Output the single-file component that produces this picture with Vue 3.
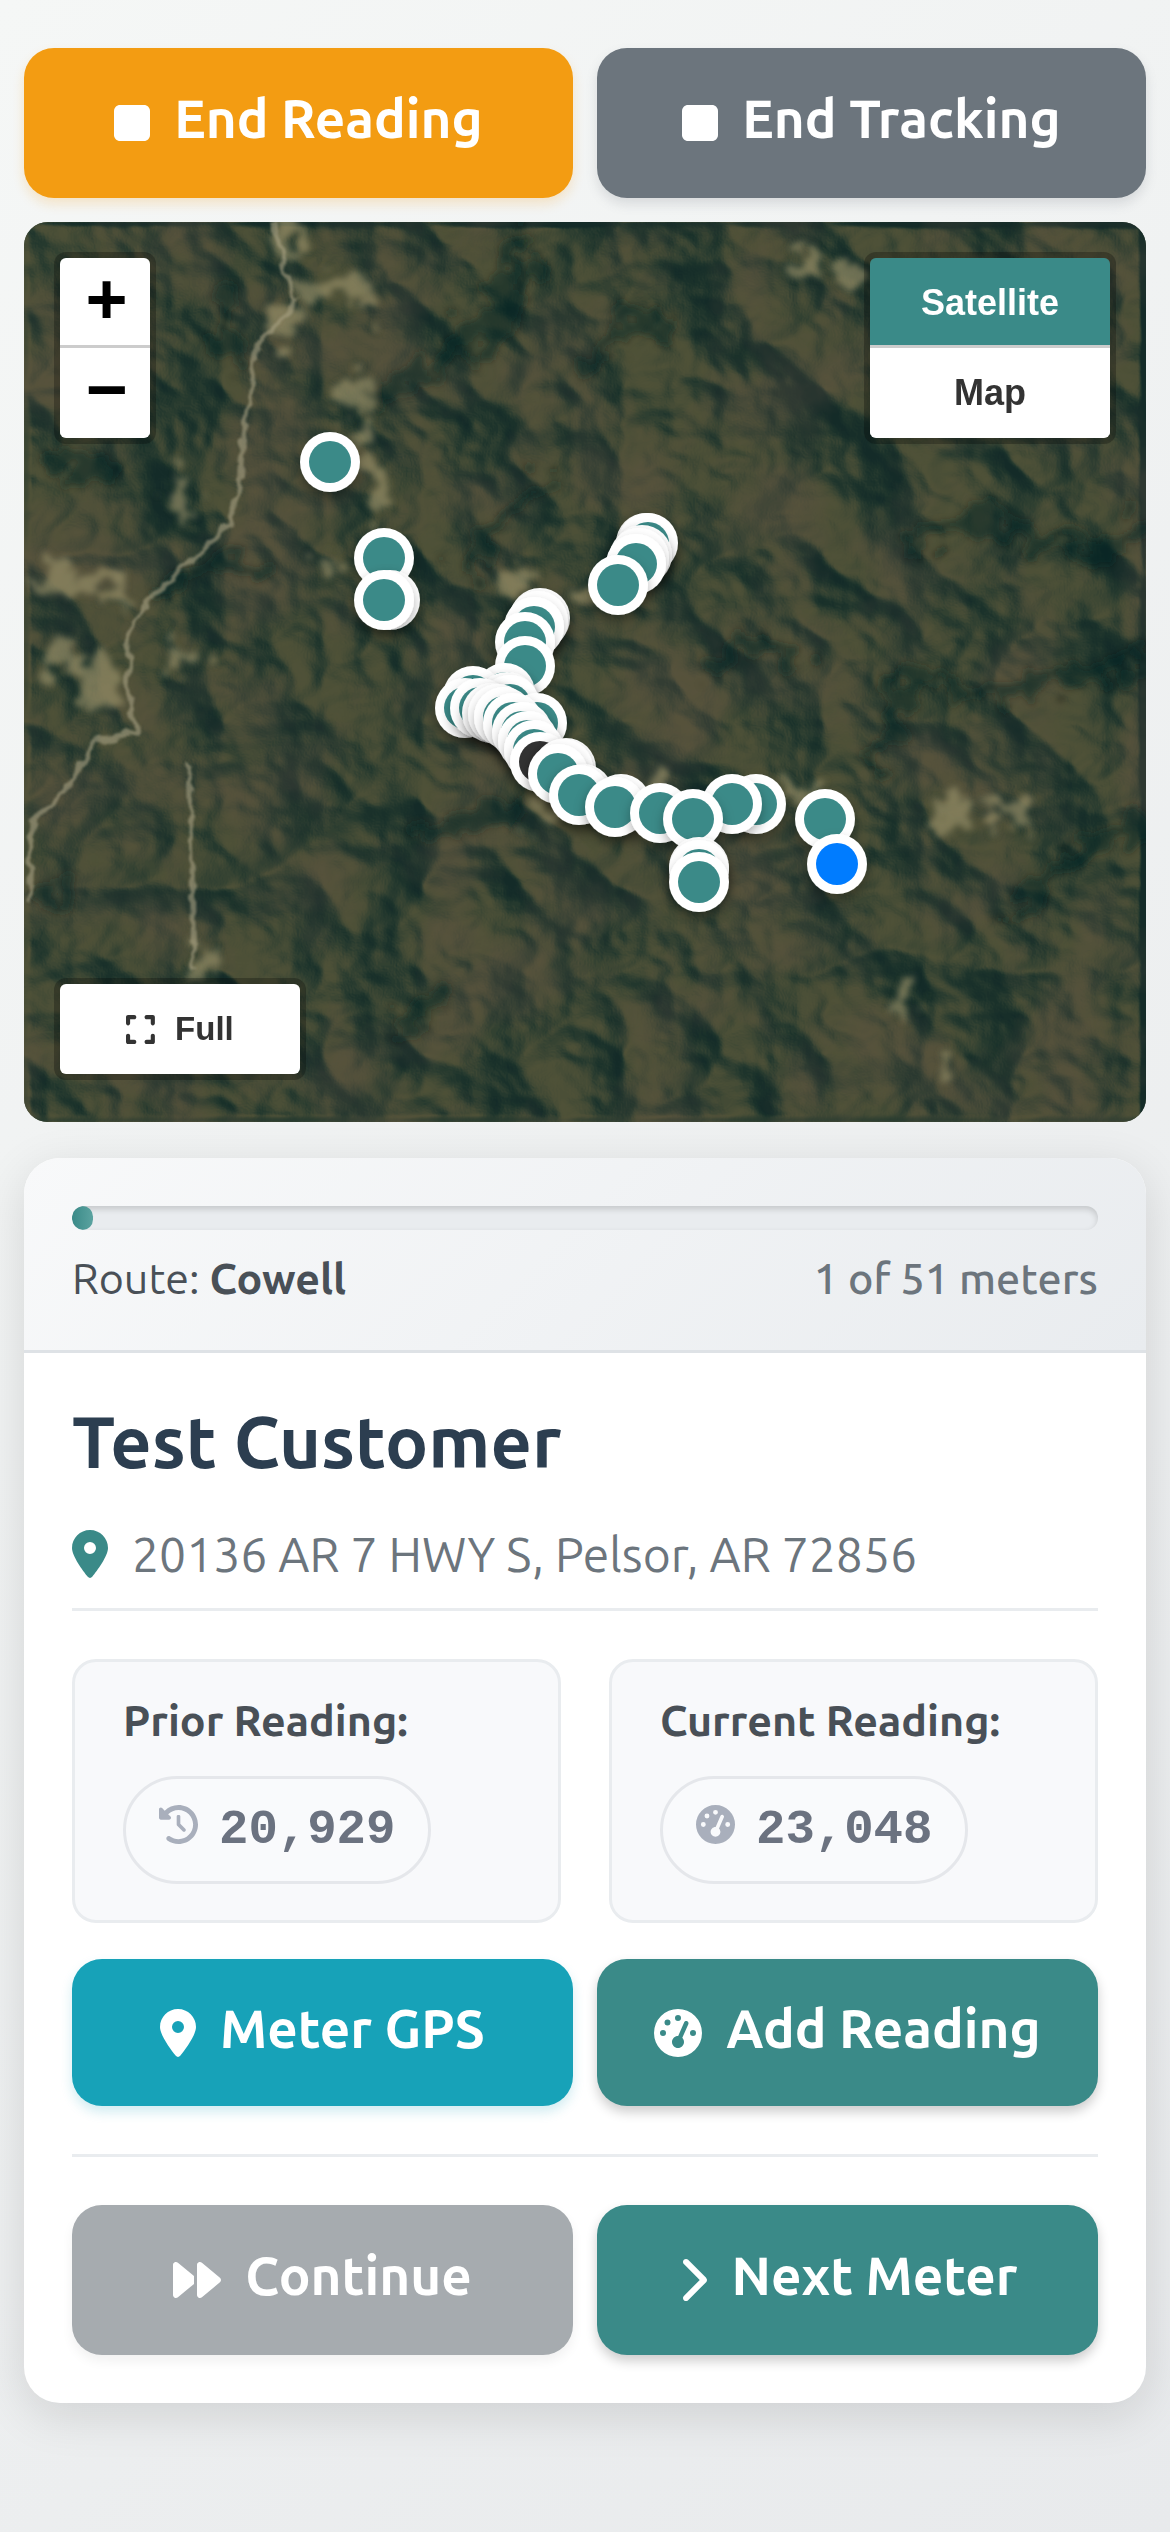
<template>
  <div class="reading-view">
    <div class="button-row">
      <button type="button" class="btn btn-warning">
        <svg class="icon" viewBox="0 0 384 512"><path :d="icons.stop" /></svg>
        <span>End Reading</span>
      </button>
      <button type="button" class="btn btn-secondary">
        <svg class="icon" viewBox="0 0 384 512"><path :d="icons.stop" /></svg>
        <span>End Tracking</span>
      </button>
    </div>

    <div class="map">
      <svg class="map-canvas" viewBox="0 0 1122 900" preserveAspectRatio="xMidYMid slice">
        <defs>
          <filter id="terrain" x="0" y="0" width="100%" height="100%" color-interpolation-filters="sRGB">
            <feTurbulence type="turbulence" baseFrequency="0.005 0.006" numOctaves="5" seed="31" />
            <feColorMatrix values="0 0 0 0 0  0 0 0 0 0  0 0 0 0 0  1 0 0 0 0" />
            <feGaussianBlur stdDeviation="3" />
            <feDiffuseLighting surfaceScale="42" diffuseConstant="1" lighting-color="#ffffff">
              <feDistantLight azimuth="150" elevation="48" />
            </feDiffuseLighting>
            <feComponentTransfer>
              <feFuncR type="table" tableValues="0.08 0.11 0.17 0.24 0.31" />
              <feFuncG type="table" tableValues="0.17 0.2 0.24 0.28 0.32" />
              <feFuncB type="table" tableValues="0.16 0.17 0.19 0.205 0.22" />
            </feComponentTransfer>
          </filter>
          <filter id="soil" x="0" y="0" width="100%" height="100%" color-interpolation-filters="sRGB">
            <feTurbulence type="fractalNoise" baseFrequency="0.01" numOctaves="5" seed="5" />
            <feColorMatrix values="0 0 0 0 0.42  0 0 0 0 0.34  0 0 0 0 0.28  0 3 0 0 -1.2" />
          </filter>
          <filter id="rough" x="-20%" y="-20%" width="140%" height="140%">
            <feTurbulence type="fractalNoise" baseFrequency="0.04" numOctaves="4" seed="9" />
            <feDisplacementMap in="SourceGraphic" scale="60" xChannelSelector="R" yChannelSelector="G" />
            <feGaussianBlur stdDeviation="3" />
          </filter>
          <filter id="rough-line" x="-20%" y="-20%" width="140%" height="140%">
            <feTurbulence type="fractalNoise" baseFrequency="0.06" numOctaves="2" seed="4" />
            <feDisplacementMap in="SourceGraphic" scale="14" xChannelSelector="R" yChannelSelector="G" />
            <feGaussianBlur stdDeviation="1" />
          </filter>
          <filter id="marker-shadow" x="-50%" y="-50%" width="200%" height="200%">
            <feDropShadow dx="0" dy="6" stdDeviation="6" flood-color="#000000" flood-opacity="0.3" />
          </filter>
        </defs>

        <rect width="1122" height="900" filter="url(#terrain)" />
        <rect width="1122" height="900" filter="url(#soil)" opacity="0.3" />

        <g filter="url(#rough)">
          <path class="ridge" d="M500 0 L470 90 L400 150 L330 180 M520 40 L450 140 M440 350 L470 310 L520 255" />
          <path class="ridge" d="M560 150 L610 90 L650 110 M880 320 L960 300 L1080 330 L1122 300 M680 450 L730 420 L780 440" />
          <path class="ridge" d="M850 545 L880 450 L960 470 L1122 440 M980 700 L1040 640 L1122 600 M390 610 L460 600 L500 580" />
          <path class="ridge" d="M200 60 L205 140 M20 240 L90 250 M130 370 L190 340 L250 350 M20 690 L50 660 M370 810 L420 770" />
          <ellipse
            v-for="(field, i) in fields"
            :key="i"
            :cx="field[0]"
            :cy="field[1]"
            :rx="field[2]"
            :ry="field[3]"
            fill="#968d66"
            opacity="0.7"
          />
        </g>
        <g class="roads" filter="url(#rough-line)">
          <path d="M250 0 L262 50 L272 78 L252 105 L232 124 L226 165 L219 210 L216 265 L205 300 L160 345 L125 380 L106 400 L103 470 L112 510 L70 520 L45 565 L8 600 L4 680" />
          <path d="M165 545 L168 640 L170 750" opacity="0.5" />
        </g>

        <g v-for="(marker, i) in markers" :key="i" filter="url(#marker-shadow)">
          <circle :cx="marker.x" :cy="marker.y" r="30" fill="#ffffff" />
          <circle :cx="marker.x" :cy="marker.y" r="21" :fill="marker.color" />
        </g>
      </svg>

      <div class="map-control zoom-control">
        <button type="button" aria-label="Zoom in">+</button>
        <button type="button" aria-label="Zoom out">−</button>
      </div>
      <div class="map-control layer-control">
        <button
          v-for="name in layers"
          :key="name"
          type="button"
          :class="{ active: layer === name }"
          @click="layer = name"
        >
          {{ name }}
        </button>
      </div>
      <div class="map-control full-control">
        <button type="button">
          <svg class="icon" viewBox="0 0 448 512"><path :d="icons.expand" /></svg>
          Full
        </button>
      </div>
    </div>

    <div class="card">
      <div class="card-header">
        <div class="progress" role="progressbar" :aria-valuenow="current" aria-valuemin="0" :aria-valuemax="total">
          <div class="progress-bar" :style="{ width: progress + '%' }"></div>
        </div>
        <div class="progress-info">
          <span class="route">Route: <strong>Cowell</strong></span>
          <span class="count">{{ current }} of {{ total }} meters</span>
        </div>
      </div>

      <div class="card-body">
        <h1>Test Customer</h1>
        <p class="address">
          <svg class="icon" viewBox="0 0 384 512"><path :d="icons.pin" /></svg>
          20136 AR 7 HWY S, Pelsor, AR 72856
        </p>

        <div class="readings">
          <div v-for="reading in readings" :key="reading.label" class="reading">
            <h2>{{ reading.label }}</h2>
            <span class="reading-value">
              <svg class="icon" viewBox="0 0 512 512"><path :d="icons[reading.icon]" /></svg>
              {{ reading.value }}
            </span>
          </div>
        </div>

        <div class="button-row meter-actions">
          <button type="button" class="btn btn-info">
            <svg class="icon" viewBox="0 0 384 512"><path :d="icons.pin" /></svg>
            <span>Meter GPS</span>
          </button>
          <button type="button" class="btn btn-primary">
            <svg class="icon" viewBox="0 0 512 512"><path :d="icons.gauge" /></svg>
            <span>Add Reading</span>
          </button>
        </div>

        <div class="button-row nav-actions">
          <button type="button" class="btn btn-disabled" disabled>
            <svg class="icon" viewBox="0 0 512 512"><path :d="icons.forward" /></svg>
            <span>Continue</span>
          </button>
          <button type="button" class="btn btn-primary">
            <svg class="icon" viewBox="0 0 320 512"><path :d="icons.chevron" /></svg>
            <span>Next Meter</span>
          </button>
        </div>
      </div>
    </div>
  </div>
</template>

<script setup>
import { ref, computed } from 'vue';

const layers = ['Satellite', 'Map'];
const layer = ref('Satellite');

const current = ref(1);
const total = ref(51);
const progress = computed(() => Math.round((current.value / total.value) * 100));

const readings = [
  { label: 'Prior Reading:', value: '20,929', icon: 'history' },
  { label: 'Current Reading:', value: '23,048', icon: 'gauge' }
];

const icons = {
  stop: 'M0 128C0 92.7 28.7 64 64 64H320c35.3 0 64 28.7 64 64V384c0 35.3-28.7 64-64 64H64c-35.3 0-64-28.7-64-64V128z',
  pin: 'M215.7 499.2C267 435 384 279.4 384 192C384 86 298 0 192 0S0 86 0 192c0 87.4 117 243 168.3 307.2c12.3 15.3 35.1 15.3 47.4 0zM192 128a64 64 0 1 1 0 128 64 64 0 1 1 0-128z',
  gauge: 'M0 256a256 256 0 1 1 512 0A256 256 0 1 1 0 256zM288 96a32 32 0 1 0 -64 0 32 32 0 1 0 64 0zM256 416c35.3 0 64-28.7 64-64c0-17.4-6.9-33.1-18.1-44.6L366 161.7c5.3-12.1-.2-26.3-12.3-31.6s-26.3 .2-31.6 12.3L257.9 288c-.6 0-1.3 0-1.9 0c-35.3 0-64 28.7-64 64s28.7 64 64 64zM176 144a32 32 0 1 0 -64 0 32 32 0 1 0 64 0zM96 288a32 32 0 1 0 0-64 32 32 0 1 0 0 64zm352-32a32 32 0 1 0 -64 0 32 32 0 1 0 64 0z',
  history: 'M75 75L41 41C25.9 25.9 0 36.6 0 57.9V168c0 13.3 10.7 24 24 24H134.1c21.4 0 32.1-25.9 17-41l-30.8-30.8C155 85.5 203 64 256 64c106 0 192 86 192 192s-86 192-192 192c-40.8 0-78.6-12.7-109.7-34.4c-14.5-10.1-34.4-6.6-44.6 7.9s-6.6 34.4 7.9 44.6C151.2 495 201.7 512 256 512c141.4 0 256-114.6 256-256S397.4 0 256 0C185.3 0 121.3 28.7 75 75zm181 53c-13.3 0-24 10.7-24 24V256c0 6.4 2.5 12.5 7 17l72 72c9.4 9.4 24.6 9.4 33.9 0s9.4-24.6 0-33.9l-65-65V152c0-13.3-10.7-24-24-24z',
  forward: 'M52.5 440.6c-9.5 7.9-22.8 9.7-34.1 4.4S0 428.4 0 416V96C0 83.6 7.2 72.3 18.4 67s24.5-3.6 34.1 4.4L224 214.3V256v41.7L52.5 440.6zM256 352V256 128 96c0-12.4 7.2-23.7 18.4-29s24.5-3.6 34.1 4.4l192 160c7.3 6.1 11.5 15.1 11.5 24.6s-4.2 18.5-11.5 24.6l-192 160c-9.5 7.9-22.8 9.7-34.1 4.4s-18.4-16.6-18.4-29V352z',
  chevron: 'M310.6 233.4c12.5 12.5 12.5 32.8 0 45.3l-192 192c-12.5 12.5-32.8 12.5-45.3 0s-12.5-32.8 0-45.3L242.7 256 73.4 86.6c-12.5-12.5-12.5-32.8 0-45.3s32.8-12.5 45.3 0l192 192z',
  expand: 'M32 32C14.3 32 0 46.3 0 64v96c0 17.7 14.3 32 32 32s32-14.3 32-32V96h64c17.7 0 32-14.3 32-32s-14.3-32-32-32H32zM64 352c0-17.7-14.3-32-32-32s-32 14.3-32 32v96c0 17.7 14.3 32 32 32h96c17.7 0 32-14.3 32-32s-14.3-32-32-32H64V352zM320 32c-17.7 0-32 14.3-32 32s14.3 32 32 32h64v64c0 17.7 14.3 32 32 32s32-14.3 32-32V64c0-17.7-14.3-32-32-32H320zM448 352c0-17.7-14.3-32-32-32s-32 14.3-32 32v64H320c-17.7 0-32 14.3-32 32s14.3 32 32 32h96c17.7 0 32-14.3 32-32V352z'
};

// x, y, radius x, radius y
const fields = [
  [262, 20, 14, 30], [300, 65, 40, 12], [345, 80, 10, 18], [255, 100, 22, 14], [330, 170, 22, 12],
  [338, 205, 10, 16], [355, 270, 14, 32], [157, 270, 12, 18], [50, 360, 45, 14], [95, 370, 10, 22],
  [490, 360, 22, 14], [560, 370, 22, 14], [155, 435, 14, 12], [75, 460, 18, 30], [40, 440, 24, 14],
  [520, 590, 12, 14], [635, 565, 22, 8], [770, 570, 16, 16], [925, 590, 20, 18], [975, 585, 16, 12],
  [1000, 590, 10, 18], [180, 740, 12, 18], [310, 340, 12, 12], [780, 35, 12, 20], [830, 50, 10, 14],
  [882, 780, 12, 16], [920, 840, 14, 10]
];

// Kept north to south so that southern markers overlap northern ones
const markers = [
  [306, 240], [622, 321], [624, 321], [618, 333], [615, 336], [360, 336], [612, 342], [594, 363],
  [366, 378], [360, 378], [516, 396], [514, 399], [510, 405], [501, 420], [501, 444], [481, 471],
  [449, 474], [483, 480], [486, 483], [441, 486], [456, 486], [468, 491], [474, 492], [480, 495],
  [513, 501], [489, 501], [498, 510], [504, 519], [510, 528], [516, 540, '#333333'], [542, 546],
  [539, 547], [534, 552], [559, 572], [555, 573], [732, 582], [708, 582], [597, 582], [591, 585],
  [636, 591], [669, 597], [801, 597], [813, 642, '#007bff'], [675, 645], [675, 648], [675, 660]
].map(([x, y, color = '#3a8a88']) => ({ x, y, color }));
</script>

<style>
body {
  margin: 0;
}
</style>

<style scoped>
.reading-view {
  box-sizing: border-box;
  min-height: 100vh;
  padding: 48px 24px;
  background: linear-gradient(135deg, #f5f7f6 0%, #e8eaec 100%);
  font-family: Ubuntu, 'Noto Sans', sans-serif;
  color: #495057;
}

.icon {
  display: block;
  flex: none;
  height: 48px;
  fill: currentColor;
}

.button-row {
  display: grid;
  grid-template-columns: 1fr 1fr;
  gap: 24px;
}

.btn {
  display: flex;
  align-items: center;
  justify-content: center;
  gap: 24px;
  height: 150px;
  padding: 0 24px;
  border: none;
  border-radius: 30px;
  color: #ffffff;
  font-family: inherit;
  font-size: 53px;
  font-weight: 600;
  line-height: 60px;
  white-space: nowrap;
  box-shadow: 0 6px 12px rgba(0, 0, 0, 0.2);
  cursor: pointer;
}

.btn span {
  padding-bottom: 8px;
}

.btn-warning {
  background: #f39c12;
  box-shadow: 0 6px 12px rgba(243, 156, 18, 0.2);
}

.btn-secondary {
  background: #6c757d;
  box-shadow: 0 6px 12px rgba(108, 117, 125, 0.2);
}

.btn-info {
  background: #17a2b8;
  box-shadow: 0 6px 12px rgba(23, 162, 184, 0.2);
}

.btn-primary {
  background: #3a8a88;
}

.btn-disabled {
  background: #a6abaf;
  box-shadow: 0 6px 12px rgba(0, 0, 0, 0.06);
  cursor: not-allowed;
}

.map {
  position: relative;
  height: 900px;
  margin-top: 24px;
  border-radius: 24px;
  overflow: hidden;
  background: #3f4a36;
}

.map-canvas {
  display: block;
  width: 100%;
  height: 100%;
}

.ridge {
  fill: none;
  stroke: #0b2422;
  stroke-width: 18;
  opacity: 0.5;
}

.roads path {
  fill: none;
  stroke: #a8a184;
  stroke-width: 5;
  stroke-linejoin: round;
  opacity: 0.6;
}

.map-control {
  position: absolute;
  display: flex;
  flex-direction: column;
  border-radius: 6px;
  overflow: hidden;
  box-shadow: 0 0 0 6px rgba(0, 0, 0, 0.25);
}

.map-control button {
  display: flex;
  align-items: center;
  justify-content: center;
  gap: 18px;
  height: 90px;
  padding: 0;
  border: none;
  background: #ffffff;
  color: #333333;
  font: bold 36px 'Liberation Sans', Arial, sans-serif;
  cursor: pointer;
}

.map-control button + button {
  box-shadow: 0 -3px 0 #cccccc;
}

.zoom-control {
  top: 36px;
  left: 36px;
  width: 90px;
}

.zoom-control button {
  padding-top: 4px;
  color: #000000;
  font: bold 72px 'Liberation Mono', monospace;
  text-indent: 3px;
}

.layer-control {
  top: 36px;
  right: 36px;
  width: 240px;
}

.layer-control .active {
  background: #3a8a88;
  color: #ffffff;
}

.full-control {
  bottom: 48px;
  left: 36px;
  width: 240px;
}

.full-control button {
  gap: 20px;
  font-size: 33px;
}

.full-control .icon {
  height: 33px;
}

.card {
  margin-top: 36px;
  border-radius: 36px;
  overflow: hidden;
  background: #ffffff;
  box-shadow: 0 12px 48px rgba(0, 0, 0, 0.12);
}

.card-header {
  padding: 48px;
  border-bottom: 3px solid #dee2e6;
  background: linear-gradient(135deg, #f8f9fa 0%, #e9ecef 100%);
}

.progress {
  height: 24px;
  border-radius: 12px;
  overflow: hidden;
  background: #e9ecef;
  box-shadow: inset 0 3px 6px rgba(0, 0, 0, 0.16);
}

.progress-bar {
  height: 100%;
  border-radius: 12px;
  background: linear-gradient(90deg, #3a8a88, #5ba3a0);
}

.progress-info {
  display: flex;
  justify-content: space-between;
  margin-top: 24px;
  font-size: 43px;
  line-height: 48px;
}

.route strong {
  font-weight: 700;
}

.count {
  color: #6c757d;
  font-weight: 500;
}

.card-body {
  padding: 48px;
}

h1 {
  margin: 0;
  color: #2c3e50;
  font-size: 72px;
  font-weight: 600;
  line-height: 81px;
}

.address {
  display: flex;
  align-items: center;
  gap: 24px;
  margin: 42px 0 0;
  padding-bottom: 24px;
  border-bottom: 3px solid #e9ecef;
  color: #6c757d;
  font-size: 48px;
  line-height: 60px;
}

.address .icon {
  color: #3a8a88;
}

.readings {
  display: grid;
  grid-template-columns: 1fr 1fr;
  gap: 48px;
  margin-top: 48px;
}

.reading {
  display: flex;
  flex-direction: column;
  align-items: flex-start;
  gap: 30px;
  padding: 33px 48px 36px;
  border: 3px solid #e9ecef;
  border-radius: 24px;
  background: #f8f9fb;
}

h2 {
  margin: 0;
  font-size: 43px;
  font-weight: 600;
  line-height: 51px;
}

.reading-value {
  display: flex;
  align-items: center;
  gap: 21px;
  height: 102px;
  padding: 0 33px;
  border: 3px solid #e5e7eb;
  border-radius: 54px;
  background: #f9fafc;
  color: #6b7280;
  font: bold 49px 'Liberation Mono', 'Courier New', monospace;
}

.reading-value .icon {
  height: 39px;
  margin-bottom: 12px;
  color: #a9afbc;
}

.meter-actions {
  margin-top: 36px;
  padding-bottom: 48px;
  border-bottom: 3px solid #e9ecef;
}

.meter-actions .btn {
  height: 147px;
}

.nav-actions {
  margin-top: 48px;
}
</style>
